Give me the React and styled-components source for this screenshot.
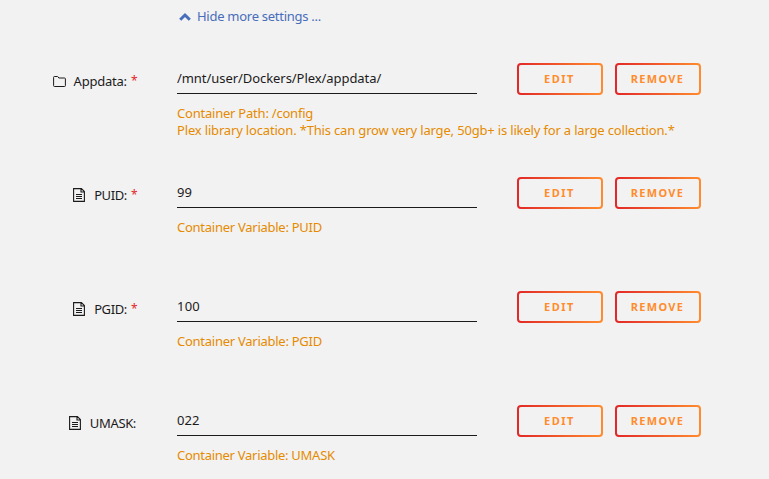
import React from "react"
import styled, { createGlobalStyle } from "styled-components"

const GlobalStyle = createGlobalStyle`
  body {
    margin: 0;
    background-color: #f2f2f2;
    color: #1c1b1b;
    font-family: "Noto Sans", sans-serif;
    font-size: 13px;
    overflow: hidden;
  }
`

const Page = styled.main`
  box-sizing: border-box;
  height: 479px;
  padding-top: 7px;
  overflow: hidden;
`

const Toggle = styled.a`
  display: flex;
  align-items: center;
  gap: 6px;
  height: 18px;
  padding-left: 179px;
  color: #486dba;
  line-height: 18px;
  white-space: pre;
  letter-spacing: ${(props) => props.$spacing}px;
`

const Settings = styled.div`
  padding-top: 38px;
`

const Row = styled.div`
  display: grid;
  grid-template-columns: 137px 300px auto;
  column-gap: 40px;
  align-items: start;
  height: 114px;
`

const Label = styled.label`
  display: flex;
  justify-content: flex-end;
  align-items: center;
  height: 18px;
  margin-top: 9px;
  padding-right: ${(props) => (props.$required ? 0 : 1)}px;
  line-height: 18px;
  white-space: pre;
  letter-spacing: ${(props) => props.$spacing}px;

  > svg {
    margin-right: 8px;
  }
`

const Required = styled.span`
  margin-left: 4px;
  color: #e22828;
  font-size: 12px;
  letter-spacing: -0.5px;
`

const Field = styled.div`
  min-width: 0;
`

const Input = styled.input`
  display: block;
  box-sizing: border-box;
  width: 300px;
  height: 31px;
  padding: 0 0 1px;
  border: 0;
  border-bottom: 1px solid #1c1b1b;
  border-radius: 0;
  outline: none;
  background: transparent;
  color: inherit;
  font: inherit;
  letter-spacing: ${(props) => props.$spacing}px;
`

const Help = styled.p`
  margin: 11px 0 0;
  color: #e68a00;
  line-height: 17px;
  white-space: nowrap;
`

const HelpLine = styled.span`
  display: block;
  letter-spacing: ${(props) => props.$spacing}px;
`

const Actions = styled.div`
  display: flex;
  gap: 12px;
`

const Button = styled.button`
  box-sizing: border-box;
  width: 86px;
  height: 32px;
  padding: 0 1px 2px 0;
  border: 2px solid transparent;
  border-radius: 4px;
  background:
    linear-gradient(#f2f2f2, #f2f2f2) padding-box,
    linear-gradient(90deg, #e22828 0%, #ff8c2f 100%) border-box;
  color: #ff8c2f;
  font-family: inherit;
  font-size: 11px;
  font-weight: 700;
  letter-spacing: ${(props) => props.$spacing}px;
`

const ChevronIcon = () => (
  <svg width="12" height="12" viewBox="0 0 12 12" fill="none">
    <path d="M1.2 9.7 6 5l4.8 4.7" stroke="currentColor" strokeWidth="3" />
  </svg>
)

const FolderIcon = () => (
  <svg width="13" height="13" viewBox="0 0 13 13" fill="none">
    <path
      d="M.6 2.3q0-.8.8-.8h3q.5 0 .8.4l.6 1.1h5.7q.9 0 .9.8v6.9q0 .8-.9.8h-10q-.9 0-.9-.8z"
      stroke="currentColor"
      strokeWidth="1"
    />
  </svg>
)

const FileIcon = () => (
  <svg width="13" height="14" viewBox="0 0 13 14" fill="none">
    <path
      d="M.6.6h7.8l3 3v9.8H.6zM8 .8v3.2h3.2"
      stroke="currentColor"
      strokeWidth="1.1"
    />
    <path d="M3 6.5h6M3 8.5h6M3 10.5h6" stroke="currentColor" />
  </svg>
)

const settings = [
  {
    name: "Appdata:",
    nameSpacing: -0.22,
    icon: FolderIcon,
    required: true,
    value: "/mnt/user/Dockers/Plex/appdata/",
    valueSpacing: -0.06,
    help: [
      { text: "Container Path: /config", spacing: -0.22 },
      {
        text: "Plex library location. *This can grow very large, 50gb+ is likely for a large collection.*",
        spacing: -0.17,
      },
    ],
  },
  {
    name: "PUID:",
    nameSpacing: -0.4,
    icon: FileIcon,
    required: true,
    value: "99",
    valueSpacing: 0,
    help: [{ text: "Container Variable: PUID", spacing: -0.26 }],
  },
  {
    name: "PGID:",
    nameSpacing: -0.4,
    icon: FileIcon,
    required: true,
    value: "100",
    valueSpacing: 0.2,
    help: [{ text: "Container Variable: PGID", spacing: -0.26 }],
  },
  {
    name: "UMASK:",
    nameSpacing: -0.35,
    icon: FileIcon,
    required: false,
    value: "022",
    valueSpacing: 0.1,
    help: [{ text: "Container Variable: UMASK", spacing: -0.28 }],
  },
]

const Setting = ({ setting }) => {
  const Icon = setting.icon
  return (
    <Row>
      <Label $spacing={setting.nameSpacing} $required={setting.required}>
        <Icon />
        {setting.name}
        {setting.required ? <Required>*</Required> : null}
      </Label>
      <Field>
        <Input defaultValue={setting.value} $spacing={setting.valueSpacing} />
        <Help>
          {setting.help.map((line) => (
            <HelpLine key={line.text} $spacing={line.spacing}>
              {line.text}
            </HelpLine>
          ))}
        </Help>
      </Field>
      <Actions>
        <Button $spacing={1.5}>EDIT</Button>
        <Button $spacing={1.3}>REMOVE</Button>
      </Actions>
    </Row>
  )
}

const App = () => (
  <>
    <GlobalStyle />
    <Page>
      <Toggle $spacing={-0.27}>
        <ChevronIcon />
        Hide more settings ...
      </Toggle>
      <Settings>
        {settings.map((setting) => (
          <Setting key={setting.name} setting={setting} />
        ))}
      </Settings>
    </Page>
  </>
)

export default App
